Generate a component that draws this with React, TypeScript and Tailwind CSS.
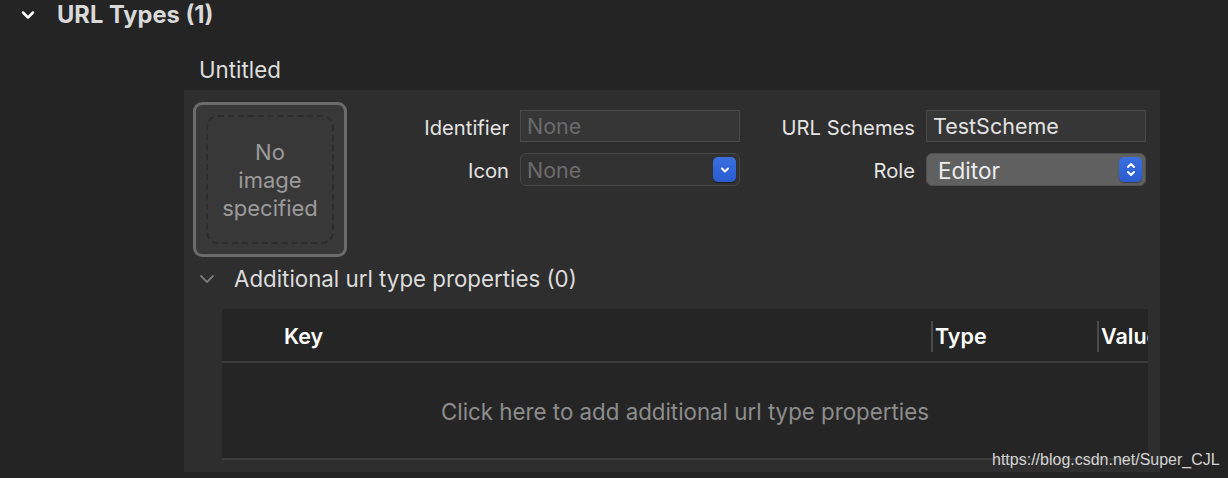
import { ChevronDown } from 'lucide-react';

const FONT = { fontFamily: 'Inter, "Noto Sans", sans-serif' };

function BlueButton({ updown = false }: { updown?: boolean }) {
  return (
    <div className="flex h-[25px] w-[23px] items-center justify-center rounded-[5px] bg-gradient-to-b from-[#3a6fe0] to-[#2a5ccf] shadow-[0_1px_1px_rgba(0,0,0,0.4)]">
      {updown ? (
        <svg width="10" height="15" viewBox="0 0 10 15" fill="none" stroke="white" strokeWidth="2" strokeLinecap="round" strokeLinejoin="round">
          <path d="M2 5l3-3 3 3" />
          <path d="M2 10l3 3 3-3" />
        </svg>
      ) : (
        <svg width="10" height="8" viewBox="0 0 10 8" fill="none" stroke="white" strokeWidth="2" strokeLinecap="round" strokeLinejoin="round">
          <path d="M2 2.5l3 3 3-3" />
        </svg>
      )}
    </div>
  );
}

function TextField({ value, placeholder }: { value?: string; placeholder?: string }) {
  return (
    <div className="flex h-[32px] items-center border border-[#4a4a4a] bg-[#363636] px-[6px] pt-[1px] text-[21.5px]">
      {value ? <span className="text-[#e2e2e2]">{value}</span> : <span className="text-[#6b6b6b]">{placeholder}</span>}
    </div>
  );
}

export default function App() {
  return (
    <div className="relative h-[478px] w-[1228px] overflow-hidden bg-[#242424]" style={FONT}>
      {/* section header */}
      <div className="flex h-[30px] items-center">
        <ChevronDown className="ml-[18px] h-[20px] w-[20px] text-white" strokeWidth={3} />
        <span className="ml-[19px] text-[23.7px] font-bold text-[#d9d9d9]">URL Types (1)</span>
      </div>

      <div className="ml-[199px] mt-[25px] text-[22.3px] leading-[30px] text-[#dedede]">Untitled</div>

      <div className="ml-[184px] mt-[5px] h-[382px] w-[976px] bg-[#2e2e2e] pt-[12px]">
        <div className="flex items-start">
          {/* image well */}
          <div className="ml-[9px] flex h-[155px] w-[154px] items-center justify-center rounded-[9px] border-[3px] border-[#6b6b6b] bg-[#383838]">
            <div className="flex h-[129px] w-[128px] items-center justify-center rounded-[12px] border-2 border-dashed border-[#2c2c2c] pt-[1px] text-center text-[22px] leading-[28px] text-[#9b9b9b]">
              No
              <br />
              image
              <br />
              specified
            </div>
          </div>

          {/* fields */}
          <div className="mt-[8px] grid grid-cols-[162px_220px_164px_220px] grid-rows-[32px_33px] items-center gap-x-[11px] gap-y-[11px] text-[20.2px] text-[#e4e4e4]">
            <span className="pt-[4px] text-right">Identifier</span>
            <TextField placeholder="None" />
            <span className="pt-[4px] text-right">URL Schemes</span>
            <TextField value="TestScheme" />

            <span className="pt-[4px] text-right">Icon</span>
            <div className="flex h-[33px] items-center justify-between rounded-[6px] border border-[#474747] bg-[#323232] pl-[6px] pr-[3px] text-[21.5px] text-[#6b6b6b]">
              <span className="pt-[2px]">None</span>
              <BlueButton />
            </div>
            <span className="pt-[4px] text-right">Role</span>
            <div className="flex h-[33px] items-center justify-between rounded-[6px] border border-[#4f4f4f] bg-[#606060] pl-[11px] pr-[3px] text-[22.5px] text-[#ececec]">
              <span className="pt-[2px]">Editor</span>
              <BlueButton updown />
            </div>
          </div>
        </div>

        {/* additional properties */}
        <div className="mt-[8px] flex h-[28px] items-center">
          <svg className="ml-[15px]" width="16" height="10" viewBox="0 0 16 10" fill="none" stroke="#7a7a7a" strokeWidth="1.8" strokeLinecap="round" strokeLinejoin="round">
            <path d="M2 2l6 6 6-6" />
          </svg>
          <span className="ml-[19px] text-[22.3px] text-[#dcdcdc]">Additional url type properties (0)</span>
        </div>

        <div className="ml-[38px] mt-[16px] w-[926px] overflow-hidden bg-[#252525]">
          <div className="flex h-[54px] items-center border-b-2 border-[#3c3c3c] pt-[3px] text-[21.5px] font-semibold text-white">
            <span className="ml-[62px] w-[647px] shrink-0">Key</span>
            <div className="h-[31px] w-[2px] shrink-0 bg-[#4a4a4a]" />
            <span className="ml-[2px] w-[162px] shrink-0">Type</span>
            <div className="h-[31px] w-[2px] shrink-0 bg-[#4a4a4a]" />
            <span className="ml-[2px] shrink-0 whitespace-nowrap">Value</span>
          </div>
          <div className="flex h-[97px] items-center justify-center border-b-2 border-[#3c3c3c] pt-[3px] text-[22.3px] text-[#8d8d8d]">
            Click here to add additional url type properties
          </div>
        </div>
      </div>

      <div
        className="absolute left-[992px] top-[448px] text-[16px] text-[#d4d4d4]"
        style={{ fontFamily: '"Liberation Sans", Arial, sans-serif' }}
      >
        https://blog.csdn.net/Super_CJL
      </div>
    </div>
  );
}
